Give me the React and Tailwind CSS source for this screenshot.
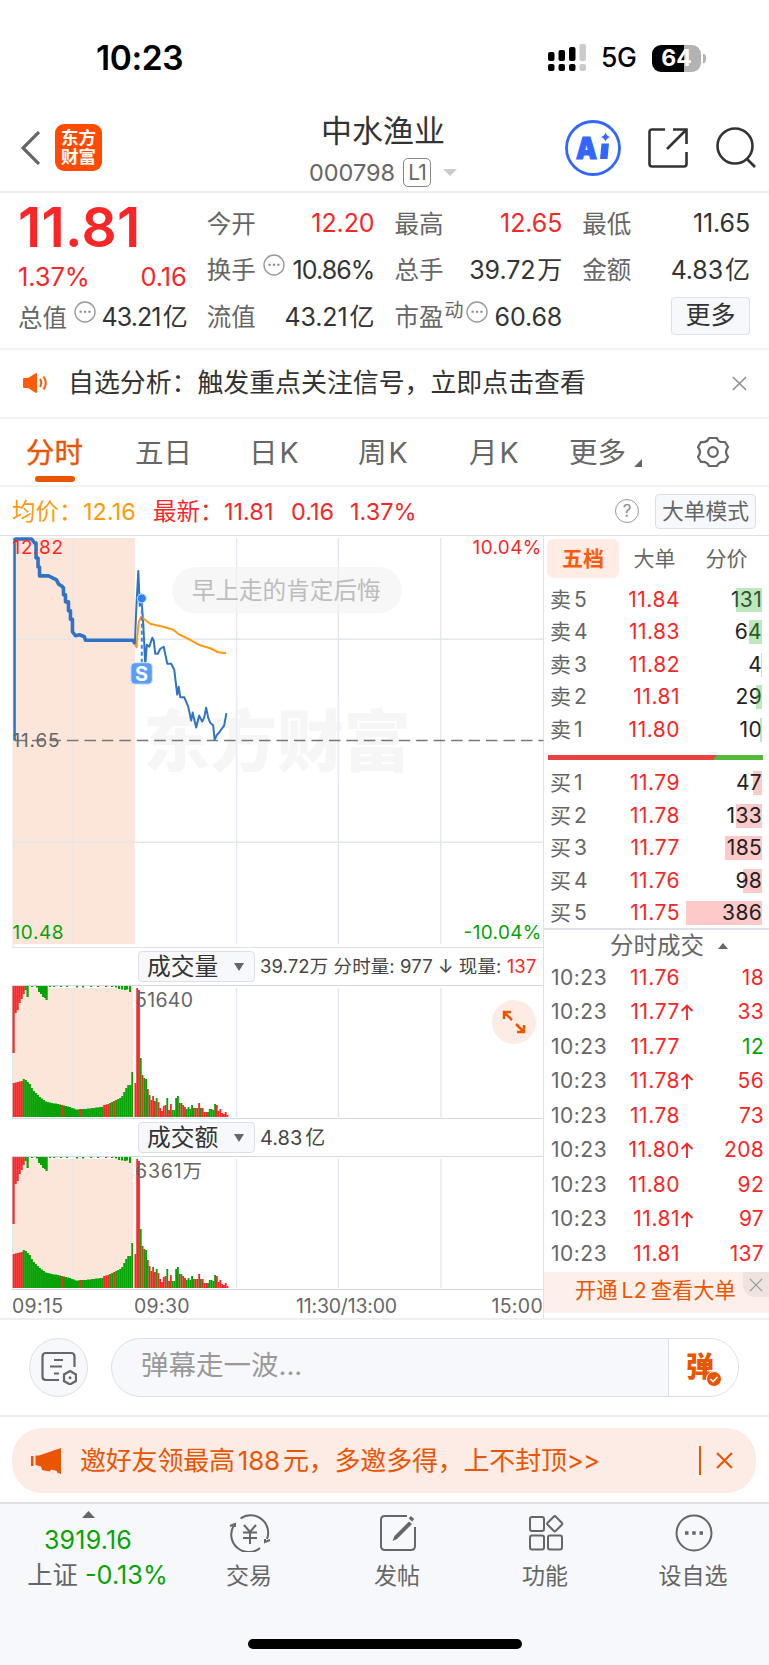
// App.jsx
import React from 'react';
import { clsx } from 'clsx';

const SELL = [
  { side: '卖', level: 5, price: '11.84', qty: 131, bar: 26 },
  { side: '卖', level: 4, price: '11.83', qty: 64, bar: 13 },
  { side: '卖', level: 3, price: '11.82', qty: 4, bar: 1 },
  { side: '卖', level: 2, price: '11.81', qty: 29, bar: 6 },
  { side: '卖', level: 1, price: '11.80', qty: 10, bar: 2 },
];

const BUY = [
  { side: '买', level: 1, price: '11.79', qty: 47, bar: 9 },
  { side: '买', level: 2, price: '11.78', qty: 133, bar: 26 },
  { side: '买', level: 3, price: '11.77', qty: 185, bar: 37 },
  { side: '买', level: 4, price: '11.76', qty: 98, bar: 19 },
  { side: '买', level: 5, price: '11.75', qty: 386, bar: 76 },
];

const TICKS = [
  { price: '11.76', qty: 18 },
  { price: '11.77', up: true, qty: 33 },
  { price: '11.77', qty: 12, green: true },
  { price: '11.78', up: true, qty: 56 },
  { price: '11.78', qty: 73 },
  { price: '11.80', up: true, qty: 208 },
  { price: '11.80', qty: 92 },
  { price: '11.81', up: true, qty: 97 },
  { price: '11.81', qty: 137 },
];

const AUCTION_LINE =
  'M14 539 H31 L34 543 H35.5 V558 H37.5 V567 H39 V576 H48 L52 578 L56 580 L58 584 L61 586 L63 588 V595 H65 V602 H68 V611 H70 V619.5 H72 V632 L75 636 L79 635 L84 637 L85 640.5 H133 L134.5 644';
const PRICE_LINE =
  'M134.5 645 L136 608 L138 571 L139.5 606 L141 596 L143 625 L145 666 L146.5 645 L149 647 L152 638 L153.5 641 L155 654 H157.5 L160 649 L163.5 647 L167 664 H171 L174 670 L177 695 L178.5 687 L180 697.5 H184 L188 707 L191 721 L192.5 713 L196 728 L199 716 L202 722 L204 718 L206 708 L208 718 L210 723 L213 726 L214.5 740 L217 735 L219 733 L221 730 L224 726 L226.3 713.5';
const AVG_LINE =
  'M135 645 L136.3 647.5 L137 636 L138.5 622 L141 617 L144 619.5 L150 624 L156 625.5 L163 627 L173 630 L178 634 L190 640 L200 645.5 L210 648.5 L218 652.5 L226 653.5';

// auction bars, one every 2px
const PRE = [
  34, 34.5, 35, 35.5, 36, 38, 37, 35, 33, 29, 26, 24, 22, 20, 18.5, 17, 15.5, 15, 14.5, 14, 13.5,
  13.5, 13, 12.5, 12, 11.5, 11, 10.5, 10, 9, 8.5, 7.5, 7.5, 8, 8, 8, 8, 8.5, 8.5, 9, 9, 9.5, 9.5, 10,
  10, 12, 12.5, 13, 14, 15, 16, 17, 18, 19, 21, 25, 29, 32, 32, 45,
];
const PRE_RED = [0, 1, 2, 3, 4, 24, 33, 45, 46, 47, 50];
const HANG = [
  [12.5, 67, 1], [14.5, 27, 1], [16.5, 24, 1], [18.5, 17, 1], [20.5, 13, 1], [22.5, 8, 1],
  [24.5, 4], [26.5, 11], [31, 1], [36, 1.5], [38, 6], [40, 8], [42, 11], [44, 12], [45.5, 14],
  [49, 1], [53, 1], [60, 1], [66, 1], [76, 1.5], [82, 1.5], [90, 1], [97, 1], [105, 1, 1],
  [111, 1], [115, 1.5], [118, 3], [121, 3.5], [124, 4], [126, 3.5], [129, 6],
];
// positive = red, negative = green
const POST = [
  34, 129, 127, -59, 42, -39, -38, 28, -22, 17, 21, 16, -19, 15, 9, 6, 11, 12, -19, 7, 13, -7, -7,
  -19, -21, 14, -14, 12, 10, -8, -10, -8, -12, 9, -9, 9, 14, -9, 9, 5, 5, -5, -8, -8, -7, -13, 12, 6,
  8, 4, 3, 5, 2,
];

const RED = '#f92628';
const GREEN = '#06a206';

const TriDown = ({ className }) => (
  <svg viewBox="0 0 10 8" preserveAspectRatio="none" className={className} fill="currentColor">
    <path d="M0 0h10L5 8z" />
  </svg>
);

const TriUp = ({ className }) => (
  <svg viewBox="0 0 10 7" preserveAspectRatio="none" className={className} fill="currentColor">
    <path d="M0 7h10L5 0z" />
  </svg>
);

const Cross = ({ className, width = 1.5 }) => (
  <svg viewBox="0 0 16 16" className={className} fill="none" stroke="currentColor" strokeWidth={width}>
    <path d="M1 1l14 14M15 1L1 15" />
  </svg>
);

const Dots = () => (
  <svg viewBox="0 0 22 22" className="h-[22px] w-[22px] shrink-0" fill="none" stroke="#999" strokeWidth="1.4">
    <circle cx="11" cy="11" r="10" />
    <path d="M5.5 10.8h2.2M9.9 10.8h2.2M14.3 10.8h2.2" stroke="#888" strokeWidth="2" />
  </svg>
);

const StatusBar = () => (
  <div className="flex h-[106px] items-start justify-between pt-[40px] pr-[63px] pl-[96px]">
    <div className="text-[33.5px] leading-[36px] font-semibold tracking-[-0.4px] text-black">10:23</div>
    <div className="flex h-[36px] items-center">
      <svg viewBox="0 0 38 28" className="h-[28px] w-[38px]">
        <rect x="0" y="8" width="6.5" height="9" rx="2" />
        <rect x="10.5" y="6" width="6.5" height="11" rx="2" />
        <rect x="21" y="3" width="6.5" height="14" rx="2" />
        <rect x="31.5" y="0" width="6.5" height="17" rx="2" fill="#ccc" />
        <rect x="0" y="20" width="6.5" height="7" rx="2" />
        <rect x="10.5" y="20" width="6.5" height="7" rx="2" />
        <rect x="21" y="20" width="6.5" height="7" rx="2" />
        <rect x="31.5" y="20" width="6.5" height="7" rx="2" fill="#ccc" />
      </svg>
      <span className="ml-[15px] w-[51px] text-[26.5px] font-medium tracking-[-0.5px] text-black">5G</span>
      <div className="flex h-[27px] w-[49px] items-center justify-center rounded-[9px] bg-linear-to-r from-black from-65% to-[#b3b3b3] to-65% text-[23px] font-bold text-white">
        64
      </div>
      <div className="ml-[2px] h-[9px] w-[3px] rounded-r-full bg-[#b3b3b3]" />
    </div>
  </div>
);

const Header = () => (
  <div className="flex h-[87px] border-b-2 border-[#eee] pr-[13px] pl-[20px]">
    <div className="flex w-[288px] items-start pt-[18px]">
      <svg viewBox="0 0 20 34" className="mt-[7px] h-[34px] w-[20px]" fill="none" stroke="#666" strokeWidth="3.2">
        <path d="M19 1L3 17l16 16" />
      </svg>
      <div className="ml-[15px] flex h-[47px] w-[47px] flex-col items-center justify-center rounded-[9px] bg-[#ff4a03] text-[17.500px] leading-[19px] font-bold text-white">
        <span>东方</span>
        <span>财富</span>
      </div>
    </div>
    <div className="flex w-[150px] flex-col items-center pt-[7px]">
      <div className="text-[31px] leading-[36px] text-[#333]">中水渔业</div>
      <div className="flex h-[34px] items-center pt-[14px] text-[23.5px] text-[#666]">
        <span>000798</span>
        <span className="ml-[8px] flex h-[29px] w-[28px] items-center justify-center rounded-[5px] border border-[#888] text-[21px] tracking-[-1px]">
          L1
        </span>
        <TriDown className="ml-[12px] h-[7px] w-[14px] text-[#ccc]" />
      </div>
    </div>
    <div className="ml-auto flex w-[191px] items-start justify-between pt-[14px]">
      <svg viewBox="0 0 56 56" className="h-[56px] w-[56px]">
        <circle cx="28" cy="28" r="26.5" fill="#fff" stroke="#3366ff" strokeWidth="2.8" />
        <text x="11" y="38.500" fontSize="30" fontWeight="900" fill="#3366ff" stroke="#3366ff" strokeWidth="1.200" textLength="21" lengthAdjust="spacingAndGlyphs">A</text>
        <path d="M36.500 23.500h7.500l-1.500 15.500h-7.500z" fill="#3366ff" />
        <path d="M40.500 12.500q1 3.500 4.500 4.500q-3.500 1-4.500 4.500q-1-3.500-4.500-4.500q3.500-1 4.500-4.500z" fill="#3366ff" />
      </svg>
      <svg viewBox="0 0 42 42" className="mt-[7px] h-[42px] w-[42px]" fill="none" stroke="#333" strokeWidth="2.6">
        <path d="M18 2.500H5Q2.500 2.500 2.500 5V37Q2.500 39.500 5 39.500H37Q39.500 39.500 39.500 37V25" />
        <path d="M26 2.500H39.500V17M39 3L20 22" />
      </svg>
      <svg viewBox="0 0 42 42" className="mt-[6px] -mr-[1px] h-[42px] w-[42px]" fill="none" stroke="#333" strokeWidth="2.6">
        <circle cx="20" cy="20" r="17.500" />
        <path d="M32 33l8 8" />
      </svg>
    </div>
  </div>
);

const Cell = ({ label, value, unit, red, tight, extra }) => (
  <div className="flex h-[46.700px] items-center justify-between">
    <span className="flex items-center text-[24.500px] text-[#666]">
      {label}
      {extra}
    </span>
    <span className={clsx('flex text-[25px]', red ? 'text-[#f92628]' : 'text-[#333]', tight ? 'tracking-[-0.900px]' : 'tracking-[-0.100px]')}>
      {value}
      {unit && <span className="ml-[2px]">{unit}</span>}
    </span>
  </div>
);

const Quote = () => (
  <div className="flex h-[157px] gap-[20px] border-b-2 border-[#f3f3f3] pr-[19px] pl-[18px] whitespace-nowrap">
    <div className="w-[169px]">
      <div className="h-[66px] pt-[4px] text-[55px] leading-[60px] font-semibold tracking-[0.300px] text-[#f92628]">11.81</div>
      <div className="flex h-[36px] items-center justify-between text-[25.500px] tracking-[-0.100px] text-[#f92628]">
        <span>1.37%</span>
        <span>0.16</span>
      </div>
      <Cell label="总值" value="43.21" unit="亿" tight extra={<span className="-mt-3 ml-[7px]"><Dots /></span>} />
    </div>
    <div className="w-[168px] pt-[8px]">
      <Cell label="今开" value="12.20" red />
      <Cell label="换手" value="10.86%" tight extra={<span className="-mt-3 ml-[7px]"><Dots /></span>} />
      <Cell label="流值" value="43.21" unit="亿" />
    </div>
    <div className="w-[168px] pt-[8px]">
      <Cell label="最高" value="12.65" red />
      <Cell label="总手" value="39.72" unit="万" />
      <Cell
        label="市盈"
        value="60.68"
        extra={
          <span className="-mt-3 ml-[1px] flex items-center gap-[2px] text-[19px]">
            动<Dots />
          </span>
        }
      />
    </div>
    <div className="w-[168px] pt-[8px]">
      <Cell label="最低" value="11.65" />
      <Cell label="金额" value="4.83" unit="亿" />
      <div className="mt-[2.500px] ml-auto flex h-[38px] w-[79px] items-center justify-center rounded-[4px] border border-[#dcdfe6] bg-[#f7f8fb] text-[25px] text-[#333]">
        更多
      </div>
    </div>
  </div>
);

const Notice = () => (
  <div className="flex h-[69px] items-center border-b-2 border-[#f3f3f3] pr-[22px] pl-[22px]">
    <svg viewBox="0 0 26 22" className="h-[22px] w-[26px]" fill="none" stroke="#ff5a0a" strokeWidth="2">
      <path d="M1 7q0-1 1-1h4l8-5q1 0 1 1v18q0 1-1 1l-8-5H2q-1 0-1-1z" fill="#ff5a0a" stroke="none" />
      <path d="M18 7q2.500 4 0 8M21.500 4.500q4.500 6.500 0 13" />
    </svg>
    <div className="ml-[20px] flex-1 pt-[1px] text-[25.900px] text-[#333]">自选分析：触发重点关注信号，立即点击查看</div>
    <Cross className="h-[15px] w-[15px] text-[#888]" />
  </div>
);

const KTab = ({ name, className }) => (
  <span className={clsx('flex gap-[2px]', className)}>
    {name}
    <span>K</span>
  </span>
);

const Tabs = () => (
  <div className="flex h-[69px] items-start border-b-2 border-[#f3f3f3] pt-[13px] pl-[26px] text-[28.500px] leading-[42px] text-[#666]">
    <div className="flex w-[109px] flex-col text-[#ea5504]">
      <span className="[-webkit-text-stroke:0.4px_#ea5504]">分时</span>
      <span className="mt-[2px] ml-[9px] h-[6px] w-[40px] rounded-full bg-[#ea5504]" />
    </div>
    <span className="w-[114px]">五日</span>
    <KTab name="日" className="w-[109px]" />
    <KTab name="周" className="w-[111px]" />
    <KTab name="月" className="w-[100px]" />
    <div className="flex w-[128px]">
      更多
      <svg viewBox="0 0 8 8" className="mt-[27px] ml-[8px] h-[8px] w-[8px]">
        <path d="M8 0v8H0z" fill="#666" />
      </svg>
    </div>
    <svg viewBox="0 0 32 32" className="mt-[4px] h-[32px] w-[32px]" fill="none" stroke="#666" strokeWidth="2.200" strokeLinejoin="round">
      <path d="M12 2h8q1 4 4.500 4h3.500l3 5q-4 5 0 10l-3 5q-6-1-8 4h-8q-2-5-8-4l-3-5q4-5 0-10l3-5q6 1 8-4z" />
      <circle cx="16" cy="16" r="4.800" />
    </svg>
  </div>
);

const InfoRow = () => (
  <div className="flex h-[48px] items-center pr-[13px] pl-[12px] text-[23.500px] whitespace-nowrap text-[#f92628]">
    <span className="w-[71px] text-[#ff9a0a]">均价：</span>
    <span className="w-[70px] text-[#ff9a0a]">12.16</span>
    <span className="w-[71px]">最新：</span>
    <span className="w-[67px]">11.81</span>
    <span className="w-[59px]">0.16</span>
    <span className="flex-1">1.37%</span>
    <div className="flex h-[24px] w-[24px] items-center justify-center rounded-full border-[1.500px] border-[#999] text-[17px] text-[#888]">?</div>
    <div className="ml-[16px] flex h-[35px] w-[101px] items-center justify-center rounded-[4px] border border-[#dcdfe6] bg-[#f7f8fb] text-[21.800px] text-[#666]">
      大单模式
    </div>
  </div>
);

const PriceChart = () => (
  <svg viewBox="12 536 532 412" className="block h-[412px] w-[532px]" fill="none">
    <rect x="12.500" y="538" width="122" height="407" fill="#fce6da" />
    <path d="M73 538V945M236.500 538V945M338.500 538V945M441 538V945M12 639.500H544M12 843H544" stroke="#e3e7ee" strokeWidth="1.400" />
    <path d="M12.500 535V948" stroke="#dfe3ea" />
    <text x="143" y="767" fontSize="67" fontWeight="900" fill="#f6f6f6">东方财富</text>
    <path d="M236.500 700V780M338.500 700V780" stroke="#e9ecf2" strokeWidth="1.400" />
    <path d="M14 741H544" stroke="#777" strokeWidth="1.500" strokeDasharray="11.500 6" />
    <path d="M14 741V538" stroke="#2f74c4" strokeWidth="2.500" />
    <path d={AUCTION_LINE} stroke="#2f74c4" strokeWidth="3.600" strokeLinejoin="round" />
    <path d={PRICE_LINE} stroke="#2f74c4" strokeWidth="2" strokeLinejoin="round" />
    <path d={AVG_LINE} stroke="#ff9a0a" strokeWidth="2" strokeLinejoin="round" />
    <path d="M141.500 603V664" stroke="#3d86f0" strokeWidth="2" strokeDasharray="4 3" />
    <circle cx="141.500" cy="598.500" r="4.500" fill="#2f80f5" stroke="#cfe2ff" />
    <rect x="130.500" y="663" width="21.500" height="21.500" rx="4" fill="#5b9cf8" stroke="#d4e5ff" />
    <text x="141.300" y="681" fontSize="20" fontWeight="700" fill="#fff" textAnchor="middle">S</text>
    <g fontSize="19">
      <text x="12" y="554.500" fill={RED} textLength="50.500">12.82</text>
      <text x="12" y="747" fill="#666" textLength="47">11.65</text>
      <text x="12" y="940" fill={GREEN} textLength="51">10.48</text>
      <text x="542" y="554.500" fill={RED} textAnchor="end" textLength="69">10.04%</text>
      <text x="542" y="940" fill={GREEN} textAnchor="end" textLength="78">-10.04%</text>
    </g>
    <rect x="172" y="567" width="230" height="46.500" rx="23" fill="#f2f2f2" fillOpacity="0.650" />
    <text x="191.500" y="599.500" fontSize="23.700" fill="#bdbdbd">早上走的肯定后悔</text>
  </svg>
);

const BarChart = ({ label, width }) => (
  <svg viewBox="12 0 532 132" className="block h-[132px] w-[532px]" fill="none">
    <rect x="12.500" y="2" width="122" height="129" fill="#fce6da" />
    <path d="M73 2V131M236.500 2V131M338.500 2V131M441 2V131" stroke="#e3e7ee" strokeWidth="1.400" />
    <path d="M12.500 0V132" stroke="#dfe3ea" />
    {PRE.map((h, i) => (
      <rect key={i} x={12.7 + i * 2.01} y={131 - h} width="2.100" height={h} fill={PRE_RED.includes(i) ? RED : GREEN} />
    ))}
    {HANG.map(([x, h, red], i) => (
      <rect key={i} x={x} y="0" width="2.200" height={h} fill={red ? RED : GREEN} />
    ))}
    <rect x="133.200" y="2" width="1.300" height="129" fill="#fff" />
    {POST.map((h, i) => (
      <rect key={i} x={134.5 + i * 1.77} y={131 - Math.abs(h)} width="1.850" height={Math.abs(h)} fill={h > 0 ? RED : GREEN} />
    ))}
    <text x="135" y="21" fontSize="19.500" fill="#666" textLength={width}>{label}</text>
  </svg>
);

const IndicatorRow = ({ name, children }) => (
  <div className="flex h-[37px] items-center pl-[126px] text-[18.500px] whitespace-nowrap text-[#444]">
    <div className="mr-[5px] flex h-[31px] w-[117px] items-center justify-between rounded-[4px] border border-[#dcdfe6] bg-[#f7f8fb] pr-[10px] pl-[8px] text-[23.800px] text-[#333]">
      {name}
      <TriDown className="h-[8px] w-[10px] text-[#666]" />
    </div>
    {children}
  </div>
);

const ChartColumn = () => (
  <div className="relative ml-[12px] flex w-[532px] flex-col border-r border-[#dfe1e8]">
    <PriceChart />
    <div className="border-t border-[#dfe1e8]">
      <IndicatorRow name="成交量">
        <span className="tracking-[0.090px]">
          39.72万 分时量: 977 ↓ 现量: <span className="text-[#f92628]">137</span>
        </span>
      </IndicatorRow>
    </div>
    <div className="border-y border-[#d5d8e0]">
      <BarChart label="51640" width={58} />
    </div>
    <IndicatorRow name="成交额">
      <span className="flex gap-[3px] text-[20px]">
        4.83<span>亿</span>
      </span>
    </IndicatorRow>
    <div className="border-y border-[#d5d8e0]">
      <BarChart label="6361万" width={67} />
    </div>
    <div className="flex h-[28px] items-center pt-[5px] text-[19.500px] tracking-[0.300px] text-[#666]">
      <span className="w-[122px]">09:15</span>
      <span className="w-[162px]">09:30</span>
      <span className="flex-1 tracking-[-0.200px]">11:30/13:00</span>
      <span>15:00</span>
    </div>
    <div className="absolute top-[464px] left-[480px] flex h-[44px] w-[44px] items-center justify-center rounded-full bg-[#fcece3]">
      <svg viewBox="0 0 24 24" className="h-[24px] w-[24px]" fill="none" stroke="#ea5504" strokeWidth="2.500">
        <path d="M2 9V2h7M2 2l8 8M22 15v7h-7M22 22l-8-8" />
      </svg>
    </div>
  </div>
);

const OrderRow = ({ row, sell }) => (
  <div className="flex h-[32.500px] items-center pr-[7px] pl-[6px] text-[21px]">
    <span className="flex w-[54px] gap-[3px] text-[#666]">
      {row.side}
      <span>{row.level}</span>
    </span>
    <span className="w-[76px] text-right tracking-[0.500px] text-[#f92628]">{row.price}</span>
    <div className="relative flex h-[24px] flex-1 items-center justify-end text-[#222]">
      <div className={clsx('absolute top-0 right-0 h-full', sell ? 'z-10 bg-[#42bd42]/35' : 'bg-[#f92628]/25')} style={{ width: row.bar }} />
      <span className="relative tracking-[0.300px]">{row.qty}</span>
    </div>
  </div>
);

const SidePanel = () => (
  <div className="flex flex-1 flex-col whitespace-nowrap">
    <div className="flex pt-[3px] pl-[3px] text-[21px] text-[#666]">
      <span className="flex h-[39px] w-[72px] items-center justify-center rounded-[6px] bg-[#ffece3] font-bold text-[#ff5a0a]">五档</span>
      <span className="flex h-[39px] w-[71px] items-center justify-center">大单</span>
      <span className="flex h-[39px] w-[73px] items-center justify-center">分价</span>
    </div>
    <div className="pt-[5px]">{SELL.map((r) => <OrderRow key={r.level} row={r} sell />)}</div>
    <svg viewBox="0 0 215 5" className="mt-[9px] ml-[4px] h-[5px] w-[215px]">
      <path d="M0 0H215V5H0z" fill="#55b93c" />
      <path d="M0 0H169L165 5H0z" fill="#e84142" />
    </svg>
    <div className="pt-[7px]">{BUY.map((r) => <OrderRow key={r.level} row={r} />)}</div>
    <div className="mt-[-1px] flex h-[33px] items-center border-t-2 border-[#dfe1e8] pl-[66px] text-[23.500px] text-[#666]">
      <span>分时成交</span>
      <TriUp className="ml-[14px] h-[6px] w-[10px]" />
    </div>
    <div className="-mt-[1px]">
      {TICKS.map((t, i) => (
        <div key={i} className="flex h-[34.500px] items-center pr-[5px] pl-[7px] text-[21px] text-[#f92628]">
          <span className="w-[57px] tracking-[0.500px] text-[#666]">10:23</span>
          <span className="w-[72px] text-right tracking-[0.500px]">{t.price}</span>
          <span className="w-[14px]">
            {t.up && (
              <svg viewBox="0 0 14 16" className="h-[16px] w-[14px]" fill="none" stroke="currentColor" strokeWidth="1.900">
                <path d="M7 16V1.500M1.500 7L7 1.500L12.500 7" />
              </svg>
            )}
          </span>
          <span className={clsx('flex-1 text-right tracking-[0.300px]', t.green && 'text-[#06a206]')}>{t.qty}</span>
        </div>
      ))}
    </div>
    <div className="mt-auto mb-[5px] flex h-[41px] justify-between bg-[#fdf0ea] pl-[31px] text-[21.300px] text-[#ea5504]">
      <span className="flex gap-[4px] leading-[36px]">
        开通<span>L2</span>
        <span>查看大单</span>
      </span>
      <span className="flex h-[25px] w-[26px] items-center justify-center rounded-bl-[12px] bg-[#eee3de]">
        <Cross className="h-[14px] w-[14px] text-[#999]" />
      </span>
    </div>
  </div>
);

const DanmuBar = () => (
  <div className="flex h-[99px] items-start border-y-2 border-[#eeeff3] pt-[18px] pl-[29px]">
    <div className="flex h-[59px] w-[59px] items-center justify-center rounded-full border-[1.500px] border-[#dcdfe6] bg-[#f7f8fb]">
      <svg viewBox="0 0 36 34" className="h-[34px] w-[36px]" fill="none" stroke="#666" strokeWidth="2.200">
        <path d="M18 29H5q-3.500 0-3.500-3.500V5.500Q1.500 2 5 2H30q3.500 0 3.500 3.500V16" />
        <path d="M13 9h9M9 15.500h12M13 22.500h5" />
        <path d="M29 20l6 3.500v6.500l-6 3.500l-6-3.500v-6.500z" />
        <circle cx="29" cy="26.700" r="1.500" fill="#666" stroke="none" />
      </svg>
    </div>
    <div className="ml-[23px] flex h-[59px] w-[628px] overflow-hidden rounded-full border-[1.500px] border-[#dcdfe6] bg-[#f7f8fb]">
      <div className="flex-1 pl-[29px] text-[27.500px] leading-[52px] text-[#999]">弹幕走一波...</div>
      <div className="relative flex w-[70px] justify-center border-l border-[#dcdfe6] bg-white pr-[7px] text-[28px] leading-[56px] font-black text-[#ea5504]">
        弹
        <svg viewBox="0 0 16 16" className="absolute top-[32px] left-[37px] h-[16px] w-[16px]" fill="none">
          <circle cx="8" cy="8" r="7.500" fill="#ea5504" stroke="#fff" />
          <path d="M4.500 8l2.500 2.500l4.500-4.500" stroke="#fff" strokeWidth="1.600" />
        </svg>
      </div>
    </div>
  </div>
);

const InviteBanner = () => (
  <div className="flex h-[85px] px-[12px] pt-[11px]">
    <div className="flex h-[65px] w-[744px] items-center rounded-[30px] bg-[#fdece5] pr-[23px] pl-[19px] text-[#ea5504]">
      <svg viewBox="0 0 30 26" className="h-[26px] w-[30px]" fill="currentColor">
        <path d="M0 8h2.500v10H0zM4.500 7.500H8L30 0v26l-4-1.500V23l-6-1.500l-1 2l-8-1.500l-1-3.500L4.500 17z" />
      </svg>
      <span className="ml-[19px] flex flex-1 gap-[3px] text-[26px] tracking-[-0.200px] whitespace-nowrap">
        邀好友领最高<span>188</span>
        <span>
          元，多邀多得，上不封顶<span className="tracking-[-1px]">&gt;&gt;</span>
        </span>
      </span>
      <span className="mr-[15px] h-[29px] w-[2px] bg-[#ea5504]" />
      <Cross className="h-[17px] w-[17px]" width={2} />
    </div>
  </div>
);

const NavItem = ({ label, children }) => (
  <div className="flex w-[148px] flex-col items-center pt-[10px]">
    <svg viewBox="0 0 42 38" className="h-[38px] w-[42px]" fill="none" stroke="#666" strokeWidth="2">
      {children}
    </svg>
    <span className="mt-[8px] mr-[2px] text-[23px] leading-[32px] text-[#666]">{label}</span>
  </div>
);

const BottomNav = () => (
  <div className="h-[163px] border-t-2 border-[#dfe1e5] bg-[#f7f8fb]">
    <div className="flex h-[135px]">
      <div className="flex w-[176px] flex-col items-center pt-[7px] whitespace-nowrap text-[#06a206]">
        <TriUp className="h-[7px] w-[13px] text-[#666]" />
        <span className="mt-[4px] text-[25px] leading-[36px] tracking-[0.200px]">3919.16</span>
        <span className="ml-[19px] text-[25.300px] leading-[34px]">
          <span className="text-[#666]">上证</span> -0.13%
        </span>
      </div>
      <NavItem label="交易">
        <path d="M11.500 4.500A17.500 17.500 0 0 1 38 25M31 34A17.500 17.500 0 0 1 4.500 12M1 12l5-2v3M41 26l-5 2v-3" />
        <path d="M15 11l6 7l6-7M14 18.500h14M14 24h14M21 18v12" />
      </NavItem>
      <NavItem label="发帖">
        <path d="M30 2H8Q4 2 4 6V32Q4 36 8 36H34Q38 36 38 32V13" />
        <path d="M32 7.500l3 2.500L20 25l-4.500 2L17.500 22z" fill="#666" stroke="none" />
        <path d="M33.500 6l2-2.500" strokeWidth="4.500" />
      </NavItem>
      <NavItem label="功能">
        <rect x="5" y="3" width="14" height="14" rx="2" />
        <rect x="5" y="21.500" width="14" height="14" rx="2" />
        <rect x="23" y="21.500" width="14" height="14" rx="2" />
        <rect x="24" y="4" width="11.500" height="11.500" rx="1.500" transform="rotate(45 29.750 9.750)" />
      </NavItem>
      <NavItem label="设自选">
        <circle cx="21" cy="19" r="17.500" />
        <path d="M12 19h3.500M19.200 19h3.500M26.500 19h3.500" strokeWidth="3.500" />
      </NavItem>
    </div>
    <div className="mx-auto h-[10px] w-[274px] rounded-full bg-black" />
  </div>
);

const App = () => (
  <div className="flex h-[1665px] w-[769px] flex-col overflow-hidden bg-white font-['Inter','Noto_Sans_CJK_SC',sans-serif]">
    <StatusBar />
    <Header />
    <Quote />
    <Notice />
    <Tabs />
    <InfoRow />
    <div className="flex h-[783px] border-t border-[#dfe1e8]">
      <ChartColumn />
      <SidePanel />
    </div>
    <DanmuBar />
    <InviteBanner />
    <BottomNav />
  </div>
);

export default App;
